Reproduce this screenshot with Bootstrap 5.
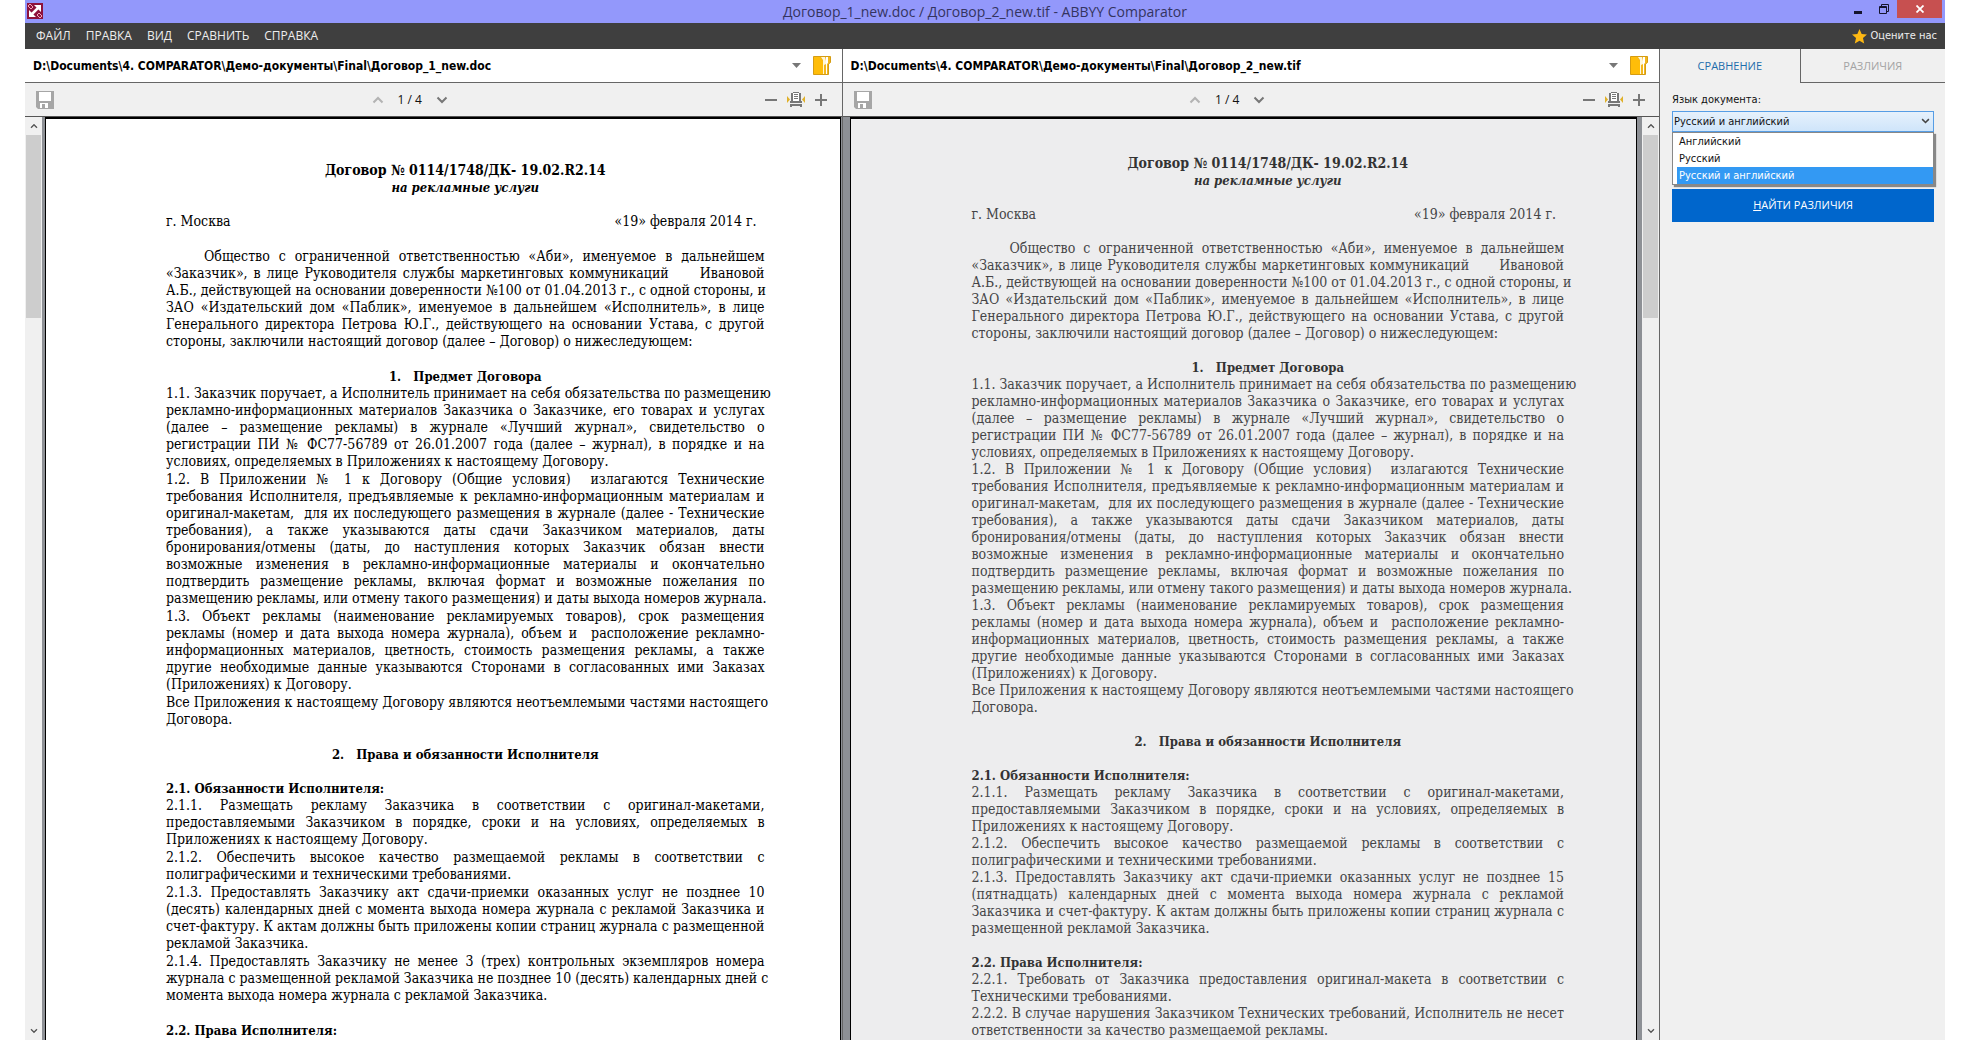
<!DOCTYPE html>
<html lang="ru">
<head>
<meta charset="utf-8">
<meta name="viewport" content="width=device-width, initial-scale=1">
<title>Договор_1_new.doc / Договор_2_new.tif - ABBYY Comparator</title>
<link href="https://cdn.jsdelivr.net/npm/bootstrap@5.3.0/dist/css/bootstrap.min.css" rel="stylesheet">
<style>
body{background:#fff;font-family:"DejaVu Sans Condensed","DejaVu Sans",sans-serif;font-size:11px;line-height:16px;color:#111;padding:0 25px}
.app-window{height:100vh;overflow:hidden;background:#f0f0f0}
.title-bar{height:23px;background:#9398fb;color:#34345f}
.title-bar h1{font-family:"Open Sans",sans-serif;font-size:14px;line-height:23px}
.app-logo{left:2px;top:3px}
.win-ctls{padding-right:3px}
.win-ctl{border:0;background:none;padding:0;height:18px;width:26px;color:#15152e}
.win-close{background:#c75050;color:#fff;width:45px}
.menu-bar{height:26px;background:#3f3f3f;padding:0 8px 0 11px}
.menu-bar a{color:#eee;text-decoration:none}
.menu-links{gap:15px;font-family:"Open Sans",sans-serif;font-size:12px}
.side-pane{width:286px;border-left:1px solid #666}
.doc-pane{min-width:0;flex:1 1 0}
.doc-pane + .doc-pane{border-left:1px solid #666}
.path-row{height:34px;background:#fff;border-bottom:1px solid #666;padding:0 11px 0 8px}
.path-text{font-weight:700;font-size:12px;color:#000}
.tool-row{height:34px;border-bottom:1px solid #555;padding:0 14px 0 11px}
.ico-btn{border:0;background:none;padding:0;line-height:0;color:#777}
.page-nav{gap:14px;font-family:"Open Sans",sans-serif;font-size:12px}
.zoom-tools{gap:9px}
.paper-area{background:#8d9095}
.scroll-col{width:17px;background:#f0f0f0;padding:0 1px}
.scroll-arrow{height:18px}
.scroll-thumb{height:183px;background:#cdcdcd}
.paper{border:1px solid #000;border-bottom:0;border-top-width:2px;font-family:"DejaVu Serif Condensed","DejaVu Serif",serif;font-size:14px;line-height:17px;overflow:hidden;min-width:0;padding:43px 75px 0 120px}
.paper-clean{background:#fff;color:#000;margin-left:3px;margin-right:1px}
.paper-scan{background:#ededee;color:#454547;margin:0 5px 0 7px;padding:36px 72px 0 121px}
.paper-scan h2,.paper-scan h3{color:#333}
.paper h2,.paper h3{font-size:14px;line-height:17px;font-weight:700;margin:0}
.paper h3{font-size:13px}
.paper p{margin:0 0 1px}
.paper .space-after{margin-bottom:18px}
.paper .head-after{margin-bottom:17px}
.paper-scan p{margin-bottom:0}
.paper-scan .space-after{margin-bottom:17px}
.ln{display:block;white-space:nowrap;text-align:justify;text-align-last:justify}
.ln-end{display:block;white-space:nowrap}
.ln-first{padding-left:38px}
.date-line{padding-right:8px}
.tab-btn{height:34px;border:0;background:none;font-family:"Open Sans",sans-serif;font-size:11px;padding:0}
.tab-on{color:#1c6cab;width:49%}
.tab-off{color:#a3a3a3;width:51%;border-left:1px solid #666;border-bottom:1px solid #666}
.side-body{padding:8px 11px 0 12px}
.lang-label{line-height:18px;margin-bottom:2px}
.lang-select{appearance:none;width:100%;height:21px;border:1px solid #569de5;background:linear-gradient(#e6f1fc,#cfe5fa);padding:0 1px;font-size:11px;line-height:18px;color:#111;border-radius:0}
.lang-chev{right:4px;top:6px;pointer-events:none}
.lang-list{top:21px;left:0;right:0;background:#fff;border:1px solid #888;box-shadow:2px 2px 1px #888;padding:0 0 0 4px;z-index:2}
.lang-list button{display:block;width:100%;border:0;background:#fff;text-align:left;padding:0 2px;line-height:17px;font-size:11px;color:#111}
.lang-list .picked{background:#3399f3;color:#fff}
.find-btn{margin-top:57px;height:33px;border-radius:0;background:#0066cc;color:#fff;font-family:"Open Sans",sans-serif;font-size:11px;padding:0;border:0}
</style>
<script src="https://cdn.jsdelivr.net/npm/bootstrap@5.3.0/dist/js/bootstrap.bundle.min.js"></script>
</head>
<body>
<svg class="d-none" aria-hidden="true">
 <symbol id="i-save" viewBox="0 0 18 18"><path fill="#a6a6a6" fill-rule="evenodd" d="M0 0h18v18H2l-2-2zM3 1v9h12V1zM4 12v5h2v-4h3v4h3v-5z"/><path fill="#fff" d="M3 1h12v9H3zM4 12h8v5H9v-4H6v4H4z"/></symbol>
 <symbol id="i-up" viewBox="0 0 12 8"><path d="M1.500 6.500 6 2l4.500 4.500" fill="none" stroke="currentColor" stroke-width="2"/></symbol>
 <symbol id="i-down" viewBox="0 0 12 8"><path d="M1.500 1.500 6 6l4.500-4.500" fill="none" stroke="currentColor" stroke-width="2"/></symbol>
 <symbol id="i-folder" viewBox="0 0 18 19"><path fill="#f3b71c" stroke="#d59c13" d="M.5.5h17v6l-2 1.500v10.500H.5z"/><path fill="#fff6d8" d="M8 1h4l1 4v3l-2 1v9h-1V4z"/><path fill="#fff" d="M13 1h2v6l-1 1v10h-1z"/><path fill="#ffbd09" d="M1 1h6l3 5v12H1z"/></symbol>
 <symbol id="i-fit" viewBox="0 0 20 16"><path fill="#e0b12a" d="M1 4l3 3.500L1 11zM19 4l-3 3.500L19 11z"/><path fill="#777" d="M5 1h2v8h6V1h2v8h1v2H4V9h1zM4 12h12v3h-2v-1H6v1H4z"/><path fill="#fff" d="M7 0h6v9H7z"/><path stroke="#777" d="M7 .5h6M8 2.500h4M8 4.500h4M8 6.500h4"/></symbol>
 <symbol id="i-minus" viewBox="0 0 12 12"><path stroke="currentColor" stroke-width="2" d="M0 6h12"/></symbol>
 <symbol id="i-plus" viewBox="0 0 12 12"><path stroke="currentColor" stroke-width="2" d="M0 6h12M6 0v12"/></symbol>
</svg>
<div class="app-window d-flex flex-column">
 <header class="title-bar position-relative d-flex justify-content-center flex-shrink-0">
  <svg class="app-logo position-absolute" width="16" height="16" viewBox="0 0 16 16"><rect width="16" height="16" fill="#8d123c"/><path d="M5 11l6-6" stroke="#fff" stroke-width="2.500"/><path fill="#fff" d="M7 2h7v7zM2 7v7h7z"/><path d="M1 3l2-2 3 3-2 2zM10 12l2-2 3 3-2 2z" fill="none" stroke="#f0a6b8"/></svg>
  <h1 class="m-0 fw-normal">Договор_1_new.doc / Договор_2_new.tif - ABBYY Comparator</h1>
  <div class="win-ctls position-absolute top-0 end-0 d-flex">
   <button class="win-ctl" aria-label="Свернуть"><svg width="8" height="10" viewBox="0 0 8 10"><path d="M0 8.500h8" stroke="currentColor" stroke-width="3"/></svg></button>
   <button class="win-ctl" aria-label="Восстановить"><svg width="10" height="10" viewBox="0 0 10 10"><path d="M2.500 2V.5h7v7H8M.5 2.500h7v7h-7zM.5 3.500h7" fill="none" stroke="currentColor"/></svg></button>
   <button class="win-ctl win-close" aria-label="Закрыть"><svg width="8" height="8" viewBox="0 0 8 8"><path d="M.5.5l7 7M7.500.5l-7 7" stroke="currentColor" stroke-width="1.800"/></svg></button>
  </div>
 </header>
 <nav class="menu-bar d-flex align-items-center justify-content-between flex-shrink-0">
  <div class="menu-links d-flex"><a href="#">ФАЙЛ</a><a href="#">ПРАВКА</a><a href="#">ВИД</a><a href="#">СРАВНИТЬ</a><a href="#">СПРАВКА</a></div>
  <a href="#" class="d-flex align-items-center gap-1"><svg width="15" height="15" viewBox="0 0 16 16"><path fill="#fdb813" d="M8 0l2.300 5.400 5.700.5-4.300 3.800L13 15.500 8 12.400 3 15.500l1.300-5.800L0 5.900l5.700-.5z"/></svg>Оцените нас</a>
 </nav>
 <div class="d-flex flex-grow-1" style="min-height:0">
  <section class="doc-pane d-flex flex-column">
   <div class="path-row d-flex align-items-center flex-shrink-0">
    <span class="path-text flex-grow-1 text-nowrap">D:\Documents\4. COMPARATOR\Демо-документы\Final\Договор_1_new.doc</span>
    <button class="ico-btn me-2" aria-label="Недавние"><svg width="9" height="5" viewBox="0 0 9 5"><path fill="#777" d="M0 0h9L4.500 5z"/></svg></button>
    <button class="ico-btn ms-1" aria-label="Открыть"><svg width="18" height="19"><use href="#i-folder"/></svg></button>
   </div>
   <div class="tool-row d-flex align-items-center justify-content-between flex-shrink-0">
    <button class="ico-btn" aria-label="Сохранить"><svg width="18" height="18"><use href="#i-save"/></svg></button>
    <div class="page-nav d-flex align-items-center"><button class="ico-btn opacity-50" aria-label="Назад"><svg width="12" height="8"><use href="#i-up"/></svg></button><span>1 / 4</span><button class="ico-btn" aria-label="Вперёд"><svg width="12" height="8"><use href="#i-down"/></svg></button></div>
    <div class="zoom-tools d-flex align-items-center"><button class="ico-btn" aria-label="Уменьшить"><svg width="12" height="12"><use href="#i-minus"/></svg></button><button class="ico-btn" aria-label="По ширине"><svg width="20" height="16"><use href="#i-fit"/></svg></button><button class="ico-btn" aria-label="Увеличить"><svg width="12" height="12"><use href="#i-plus"/></svg></button></div>
   </div>
   <div class="paper-area d-flex flex-grow-1" style="min-height:0">
    <div class="scroll-col d-flex flex-column flex-shrink-0">
     <div class="scroll-arrow d-flex align-items-center justify-content-center"><svg width="8" height="6" viewBox="0 0 12 8" color="#555"><use href="#i-up"/></svg></div>
     <div class="scroll-thumb"></div>
     <div class="scroll-arrow d-flex align-items-center justify-content-center mt-auto"><svg width="8" height="6" viewBox="0 0 12 8" color="#555"><use href="#i-down"/></svg></div>
    </div>
    <article class="paper paper-clean flex-grow-1">
     <h2 class="text-center">Договор № 0114/1748/ДК- 19.02.R2.14</h2>
     <h3 class="text-center fst-italic head-after">на рекламные услуги</h3>
     <p class="d-flex justify-content-between date-line space-after"><span>г. Москва</span><span>«19» февраля 2014 г.</span></p>
     <p class="space-after"><span class="ln ln-first">Общество с ограниченной ответственностью «Аби», именуемое в дальнейшем</span><span class="ln">«Заказчик», в лице Руководителя службы маркетинговых коммуникаций&emsp;&emsp; Ивановой</span><span class="ln">А.Б., действующей на основании доверенности №100 от 01.04.2013 г., с одной стороны, и</span><span class="ln">ЗАО «Издательский дом «Паблик», именуемое в дальнейшем «Исполнитель», в лице</span><span class="ln">Генерального директора Петрова Ю.Г., действующего на основании Устава, с другой</span><span class="ln-end">стороны, заключили настоящий договор (далее – Договор) о нижеследующем:</span></p>
     <h3 class="text-center">1.&nbsp;&nbsp; Предмет Договора</h3>
     <p><span class="ln">1.1. Заказчик поручает, а Исполнитель принимает на себя обязательства по размещению</span><span class="ln">рекламно-информационных материалов Заказчика о Заказчике, его товарах и услугах</span><span class="ln">(далее – размещение рекламы) в журнале «Лучший журнал», свидетельство о</span><span class="ln">регистрации ПИ № ФС77-56789 от 26.01.2007 года (далее – журнал), в порядке и на</span><span class="ln-end">условиях, определяемых в Приложениях к настоящему Договору.</span></p>
     <p><span class="ln">1.2. В Приложении № 1 к Договору (Общие условия)&nbsp; излагаются Технические</span><span class="ln">требования Исполнителя, предъявляемые к рекламно-информационным материалам и</span><span class="ln">оригинал-макетам,&nbsp; для их последующего размещения в журнале (далее - Технические</span><span class="ln">требования), а также указываются даты сдачи Заказчиком материалов, даты</span><span class="ln">бронирования/отмены (даты, до наступления которых Заказчик обязан внести</span><span class="ln">возможные изменения в рекламно-информационные материалы и окончательно</span><span class="ln">подтвердить размещение рекламы, включая формат и возможные пожелания по</span><span class="ln">размещению рекламы, или отмену такого размещения) и даты выхода номеров журнала.</span></p>
     <p><span class="ln">1.3. Объект рекламы (наименование рекламируемых товаров), срок размещения</span><span class="ln">рекламы (номер и дата выхода номера журнала), объем и&nbsp; расположение рекламно-</span><span class="ln">информационных материалов, цветность, стоимость размещения рекламы, а также</span><span class="ln">другие необходимые данные указываются Сторонами в согласованных ими Заказах</span><span class="ln-end">(Приложениях) к Договору.</span></p>
     <p class="space-after"><span class="ln">Все Приложения к настоящему Договору являются неотъемлемыми частями настоящего</span><span class="ln-end">Договора.</span></p>
     <h3 class="text-center head-after">2.&nbsp;&nbsp; Права и обязанности Исполнителя</h3>
     <h3>2.1. Обязанности Исполнителя:</h3>
     <p><span class="ln">2.1.1. Размещать рекламу Заказчика в соответствии с оригинал-макетами,</span><span class="ln">предоставляемыми Заказчиком в порядке, сроки и на условиях, определяемых в</span><span class="ln-end">Приложениях к настоящему Договору.</span></p>
     <p><span class="ln">2.1.2. Обеспечить высокое качество размещаемой рекламы в соответствии с</span><span class="ln-end">полиграфическими и техническими требованиями.</span></p>
     <p><span class="ln">2.1.3. Предоставлять Заказчику акт сдачи-приемки оказанных услуг не позднее 10</span><span class="ln">(десять) календарных дней с момента выхода номера журнала с рекламой Заказчика и</span><span class="ln">счет-фактуру. К актам должны быть приложены копии страниц журнала с размещенной</span><span class="ln-end">рекламой Заказчика.</span></p>
     <p class="space-after"><span class="ln">2.1.4. Предоставлять Заказчику не менее 3 (трех) контрольных экземпляров номера</span><span class="ln">журнала с размещенной рекламой Заказчика не позднее 10 (десять) календарных дней с</span><span class="ln-end">момента выхода номера журнала с рекламой Заказчика.</span></p>
     <h3>2.2. Права Исполнителя:</h3>
    </article>
   </div>
  </section>
  <section class="doc-pane d-flex flex-column">
   <div class="path-row d-flex align-items-center flex-shrink-0">
    <span class="path-text flex-grow-1 text-nowrap">D:\Documents\4. COMPARATOR\Демо-документы\Final\Договор_2_new.tif</span>
    <button class="ico-btn me-2" aria-label="Недавние"><svg width="9" height="5" viewBox="0 0 9 5"><path fill="#777" d="M0 0h9L4.500 5z"/></svg></button>
    <button class="ico-btn ms-1" aria-label="Открыть"><svg width="18" height="19"><use href="#i-folder"/></svg></button>
   </div>
   <div class="tool-row d-flex align-items-center justify-content-between flex-shrink-0">
    <button class="ico-btn" aria-label="Сохранить"><svg width="18" height="18"><use href="#i-save"/></svg></button>
    <div class="page-nav d-flex align-items-center"><button class="ico-btn opacity-50" aria-label="Назад"><svg width="12" height="8"><use href="#i-up"/></svg></button><span>1 / 4</span><button class="ico-btn" aria-label="Вперёд"><svg width="12" height="8"><use href="#i-down"/></svg></button></div>
    <div class="zoom-tools d-flex align-items-center"><button class="ico-btn" aria-label="Уменьшить"><svg width="12" height="12"><use href="#i-minus"/></svg></button><button class="ico-btn" aria-label="По ширине"><svg width="20" height="16"><use href="#i-fit"/></svg></button><button class="ico-btn" aria-label="Увеличить"><svg width="12" height="12"><use href="#i-plus"/></svg></button></div>
   </div>
   <div class="paper-area d-flex flex-grow-1" style="min-height:0">
    <article class="paper paper-scan flex-grow-1">
     <h2 class="text-center">Договор № 0114/1748/ДК- 19.02.R2.14</h2>
     <h3 class="text-center fst-italic head-after">на рекламные услуги</h3>
     <p class="d-flex justify-content-between date-line space-after"><span>г. Москва</span><span>«19» февраля 2014 г.</span></p>
     <p class="space-after"><span class="ln ln-first">Общество с ограниченной ответственностью «Аби», именуемое в дальнейшем</span><span class="ln">«Заказчик», в лице Руководителя службы маркетинговых коммуникаций&emsp;&emsp; Ивановой</span><span class="ln">А.Б., действующей на основании доверенности №100 от 01.04.2013 г., с одной стороны, и</span><span class="ln">ЗАО «Издательский дом «Паблик», именуемое в дальнейшем «Исполнитель», в лице</span><span class="ln">Генерального директора Петрова Ю.Г., действующего на основании Устава, с другой</span><span class="ln-end">стороны, заключили настоящий договор (далее – Договор) о нижеследующем:</span></p>
     <h3 class="text-center">1.&nbsp;&nbsp; Предмет Договора</h3>
     <p><span class="ln">1.1. Заказчик поручает, а Исполнитель принимает на себя обязательства по размещению</span><span class="ln">рекламно-информационных материалов Заказчика о Заказчике, его товарах и услугах</span><span class="ln">(далее – размещение рекламы) в журнале «Лучший журнал», свидетельство о</span><span class="ln">регистрации ПИ № ФС77-56789 от 26.01.2007 года (далее – журнал), в порядке и на</span><span class="ln-end">условиях, определяемых в Приложениях к настоящему Договору.</span></p>
     <p><span class="ln">1.2. В Приложении № 1 к Договору (Общие условия)&nbsp; излагаются Технические</span><span class="ln">требования Исполнителя, предъявляемые к рекламно-информационным материалам и</span><span class="ln">оригинал-макетам,&nbsp; для их последующего размещения в журнале (далее - Технические</span><span class="ln">требования), а также указываются даты сдачи Заказчиком материалов, даты</span><span class="ln">бронирования/отмены (даты, до наступления которых Заказчик обязан внести</span><span class="ln">возможные изменения в рекламно-информационные материалы и окончательно</span><span class="ln">подтвердить размещение рекламы, включая формат и возможные пожелания по</span><span class="ln">размещению рекламы, или отмену такого размещения) и даты выхода номеров журнала.</span></p>
     <p><span class="ln">1.3. Объект рекламы (наименование рекламируемых товаров), срок размещения</span><span class="ln">рекламы (номер и дата выхода номера журнала), объем и&nbsp; расположение рекламно-</span><span class="ln">информационных материалов, цветность, стоимость размещения рекламы, а также</span><span class="ln">другие необходимые данные указываются Сторонами в согласованных ими Заказах</span><span class="ln-end">(Приложениях) к Договору.</span></p>
     <p class="space-after"><span class="ln">Все Приложения к настоящему Договору являются неотъемлемыми частями настоящего</span><span class="ln-end">Договора.</span></p>
     <h3 class="text-center head-after">2.&nbsp;&nbsp; Права и обязанности Исполнителя</h3>
     <h3>2.1. Обязанности Исполнителя:</h3>
     <p><span class="ln">2.1.1. Размещать рекламу Заказчика в соответствии с оригинал-макетами,</span><span class="ln">предоставляемыми Заказчиком в порядке, сроки и на условиях, определяемых в</span><span class="ln-end">Приложениях к настоящему Договору.</span></p>
     <p><span class="ln">2.1.2. Обеспечить высокое качество размещаемой рекламы в соответствии с</span><span class="ln-end">полиграфическими и техническими требованиями.</span></p>
     <p class="space-after"><span class="ln">2.1.3. Предоставлять Заказчику акт сдачи-приемки оказанных услуг не позднее 15</span><span class="ln">(пятнадцать) календарных дней с момента выхода номера журнала с рекламой</span><span class="ln">Заказчика и счет-фактуру. К актам должны быть приложены копии страниц журнала с</span><span class="ln-end">размещенной рекламой Заказчика.</span></p>
     <h3>2.2. Права Исполнителя:</h3>
     <p><span class="ln">2.2.1. Требовать от Заказчика предоставления оригинал-макета в соответствии с</span><span class="ln-end">Техническими требованиями.</span></p>
     <p><span class="ln">2.2.2. В случае нарушения Заказчиком Технических требований, Исполнитель не несет</span><span class="ln-end">ответственности за качество размещаемой рекламы.</span></p>
    </article>
    <div class="scroll-col d-flex flex-column flex-shrink-0">
     <div class="scroll-arrow d-flex align-items-center justify-content-center"><svg width="8" height="6" viewBox="0 0 12 8" color="#555"><use href="#i-up"/></svg></div>
     <div class="scroll-thumb"></div>
     <div class="scroll-arrow d-flex align-items-center justify-content-center mt-auto"><svg width="8" height="6" viewBox="0 0 12 8" color="#555"><use href="#i-down"/></svg></div>
    </div>
   </div>
  </section>
  <aside class="side-pane flex-shrink-0">
   <div class="d-flex"><button class="tab-btn tab-on">СРАВНЕНИЕ</button><button class="tab-btn tab-off">РАЗЛИЧИЯ</button></div>
   <div class="side-body">
    <label class="lang-label d-block" for="lang">Язык документа:</label>
    <div class="position-relative">
     <select id="lang" class="lang-select d-block"><option>Русский и английский</option><option>Английский</option><option>Русский</option></select>
     <svg class="lang-chev position-absolute" width="9" height="8" viewBox="0 0 12 8" color="#444"><use href="#i-down"/></svg>
     <div class="lang-list position-absolute"><button>Английский</button><button>Русский</button><button class="picked">Русский и английский</button></div>
    </div>
    <button class="find-btn btn w-100"><u>Н</u>АЙТИ РАЗЛИЧИЯ</button>
   </div>
  </aside>
 </div>
</div>
</body>
</html>
